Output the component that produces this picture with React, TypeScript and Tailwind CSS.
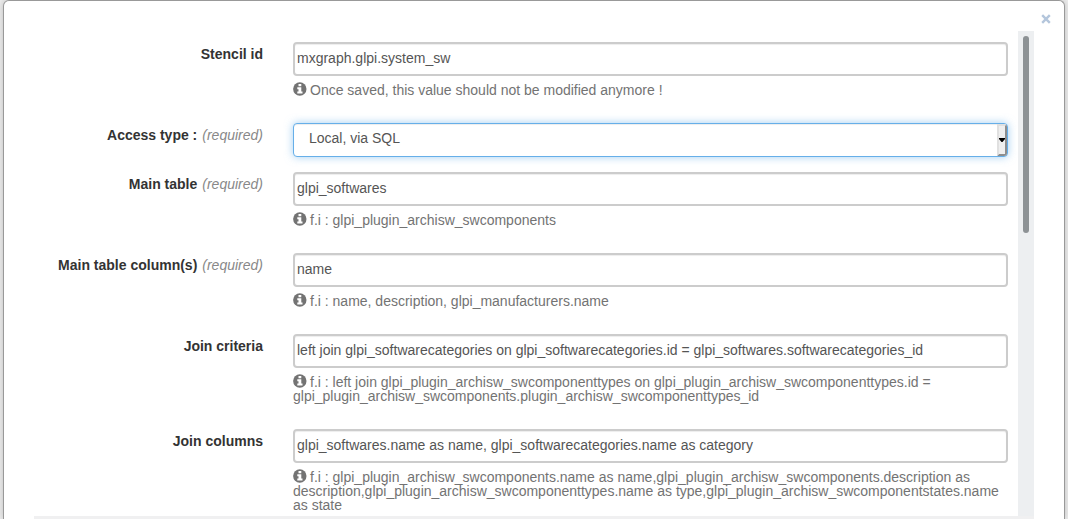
import type { ReactNode } from "react";

type Field = {
  id: string;
  label: string;
  required?: boolean;
  value: string;
  help?: string;
  options?: string[];
};

const fields: Field[] = [
  { id: "stencil", label: "Stencil id", value: "mxgraph.glpi.system_sw", help: "Once saved, this value should not be modified anymore !" },
  { id: "access", label: "Access type :", required: true, value: "Local, via SQL", options: ["Local, via SQL"] },
  { id: "table", label: "Main table", required: true, value: "glpi_softwares", help: "f.i : glpi_plugin_archisw_swcomponents" },
  { id: "columns", label: "Main table column(s)", required: true, value: "name", help: "f.i : name, description, glpi_manufacturers.name" },
  {
    id: "join",
    label: "Join criteria",
    value: "left join glpi_softwarecategories on glpi_softwarecategories.id = glpi_softwares.softwarecategories_id",
    help: "f.i : left join glpi_plugin_archisw_swcomponenttypes on glpi_plugin_archisw_swcomponenttypes.id = glpi_plugin_archisw_swcomponents.plugin_archisw_swcomponenttypes_id",
  },
  {
    id: "joincolumns",
    label: "Join columns",
    value: "glpi_softwares.name as name, glpi_softwarecategories.name as category",
    help: "f.i : glpi_plugin_archisw_swcomponents.name as name,glpi_plugin_archisw_swcomponents.description as description,glpi_plugin_archisw_swcomponenttypes.name as type,glpi_plugin_archisw_swcomponentstates.name as state",
  },
];

function InfoIcon() {
  return (
    <svg aria-hidden="true" viewBox="0 0 14 14" className="mr-[3px] -mt-1 inline-block h-[14px] w-[14px] align-middle">
      <circle cx="6.8" cy="7" r="6.7" fill="#737373" />
      <path d="M5.500 2h2.800v2.200H5.500zM4.300 5.300h4v4.200h1.200v1.900H4.300V9.500h1.200V7.200H4.300z" fill="#fff" />
    </svg>
  );
}

function Help({ id, children }: { id: string; children: ReactNode }) {
  return (
    <p id={id} className="mt-[7px] mb-[11px] text-[14px] leading-[14px] text-[#737373]">
      <InfoIcon />
      {children}
    </p>
  );
}

function SelectBox({ id, options }: { id: string; options: string[] }) {
  return (
    <div className="relative">
      <select
        id={id}
        className="block h-[34px] w-full appearance-none rounded-[4px] border border-[#66afe9] bg-white pr-4 pb-1 pl-[15px] text-[14px] text-[#555] shadow-[inset_0_1px_1px_rgba(0,0,0,0.075),0_0_8px_rgba(102,175,233,0.6)] outline-none"
      >
        {options.map((o) => (
          <option key={o}>{o}</option>
        ))}
      </select>
      <span
        aria-hidden="true"
        className="pointer-events-none absolute top-px right-px bottom-px flex w-[10px] items-center justify-center rounded-r-[3px] border-2 border-t-[#e0e0e0] border-r-[#8e8e8e] border-b-[#8e8e8e] border-l-[#e0e0e0] bg-[#efefef]"
      >
        <svg viewBox="0 0 6 4" className="h-[4px] w-[6px] shrink-0">
          <path d="M0 0h6v1L3.500 4h-1L0 1z" fill="#000" />
        </svg>
      </span>
    </div>
  );
}

function FieldRow({ field }: { field: Field }) {
  return (
    <div className="mb-[15px] grid grid-cols-[1fr_3fr]">
      <label htmlFor={field.id} className="pt-[2px] pr-[15px] text-right text-[14px] leading-5 font-bold text-[#333]">
        {field.label}
        {field.required && <span className="ml-[5px] font-normal text-[#888] italic">(required)</span>}
      </label>
      <div className="min-w-0 pr-[2px] pl-[15px]">
        {field.options ? (
          <SelectBox id={field.id} options={field.options} />
        ) : (
          <input
            id={field.id}
            type="text"
            defaultValue={field.value}
            aria-describedby={`${field.id}-help`}
            className="block h-[34px] w-full rounded-[4px] border-2 border-[#ccc] bg-white px-[2px] pb-[2px] text-[14px] text-[#555] shadow-[inset_0_1px_1px_rgba(0,0,0,0.075)] outline-none"
          />
        )}
        {field.help && <Help id={`${field.id}-help`}>{field.help}</Help>}
      </div>
    </div>
  );
}

export default function App() {
  return (
    <div className="h-screen overflow-hidden bg-[#ececec] px-[3px] font-['Liberation_Sans',Arial,sans-serif]">
      <div
        role="dialog"
        aria-label="Stencil"
        className="flex h-full flex-col rounded-t-[6px] border border-b-0 border-[#999] bg-white shadow-[0_0_6px_rgba(0,0,0,0.2)]"
      >
        <header className="flex h-[30px] shrink-0 items-center justify-end pt-[5px] pr-3">
          <button type="button" aria-label="Close" className="flex h-4 w-3 items-center justify-center">
            <svg viewBox="0 0 10 10" className="h-[10px] w-[10px]">
              <path d="M1.200 1.200L8.800 8.800M8.800 1.200L1.200 8.800" stroke="#b4c6dc" strokeWidth="2.400" />
            </svg>
          </button>
        </header>
        <div className="mx-[30px] flex min-h-0 flex-1">
          <form className="min-w-0 flex-1 overflow-hidden pt-[11px] pr-2">
            {fields.map((f) => (
              <FieldRow key={f.id} field={f} />
            ))}
          </form>
          <div className="w-4 shrink-0 bg-[#edeff1] px-[5px] pt-[5px]">
            <div className="h-[41%] rounded-full bg-[#8d9295]" />
          </div>
        </div>
        <div className="mx-[30px] h-[3px] shrink-0 bg-[#f0f0f1]" />
      </div>
    </div>
  );
}
